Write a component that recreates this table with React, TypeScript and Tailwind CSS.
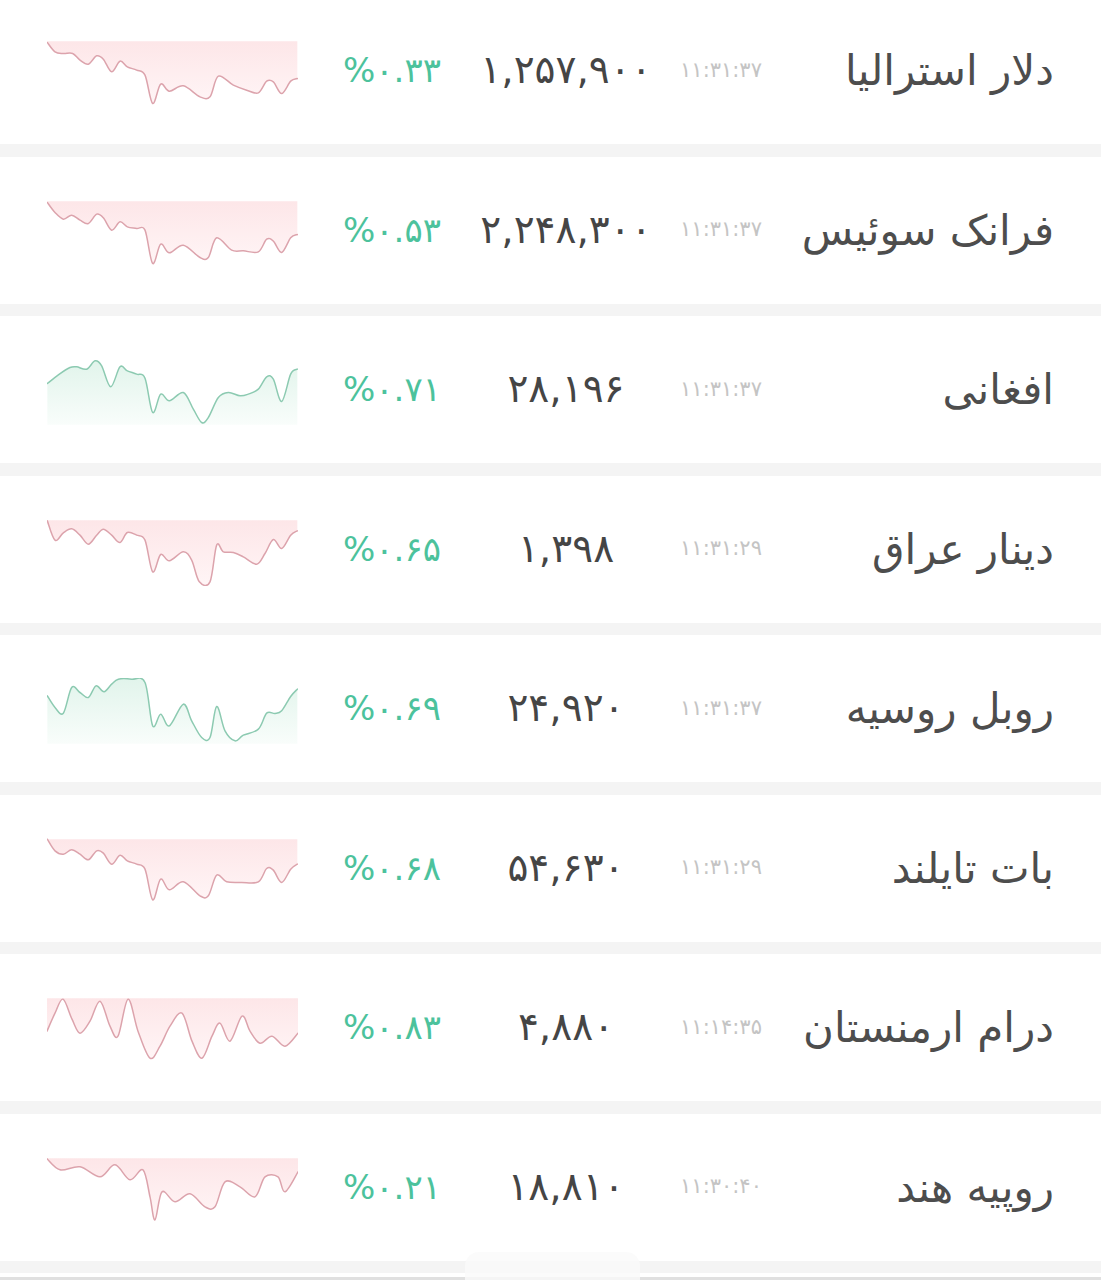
type Pt = [number, number];

type Rate = {
  name: string;
  price: string;
  change: string;
  time: string;
  up: boolean;
  points: Pt[];
  shift?: number;
};

const rates: Rate[] = [
  {
    name: "دلار استرالیا",
    price: "۱,۲۵۷,۹۰۰",
    change: "%۰.۳۳",
    time: "۱۱:۳۱:۳۷",
    up: false,
    points: [
      [22, 32], [45, 60], [70, 65], [98, 65], [120, 85], [145, 97], [170, 72], [190, 82],
      [215, 120], [240, 88], [262, 105], [290, 115], [315, 130], [338, 215], [362, 157],
      [388, 178], [430, 162], [480, 195], [510, 195], [535, 133], [580, 160], [620, 175],
      [655, 183], [680, 148], [700, 150], [725, 185], [752, 148], [772, 140],
    ],
  },
  {
    name: "فرانک سوئیس",
    price: "۲,۲۴۸,۳۰۰",
    change: "%۰.۵۳",
    time: "۱۱:۳۱:۳۷",
    up: false,
    points: [
      [22, 32], [45, 62], [70, 82], [95, 70], [120, 85], [145, 95], [170, 67], [190, 78],
      [215, 115], [240, 90], [262, 105], [290, 110], [315, 115], [338, 215], [362, 157],
      [388, 183], [430, 160], [480, 197], [505, 197], [530, 138], [575, 175], [610, 177],
      [655, 180], [680, 142], [700, 148], [725, 182], [752, 138], [772, 128],
    ],
  },
  {
    name: "افغانی",
    price: "۲۸,۱۹۶",
    change: "%۰.۷۱",
    time: "۱۱:۳۱:۳۷",
    up: true,
    points: [
      [22, 98], [55, 72], [90, 50], [110, 48], [140, 55], [165, 30], [185, 45], [212, 108],
      [240, 48], [262, 60], [290, 70], [315, 82], [338, 185], [362, 130], [388, 150],
      [430, 125], [460, 175], [485, 215], [505, 200], [535, 140], [565, 125], [600, 135],
      [625, 130], [655, 115], [680, 78], [700, 85], [725, 152], [752, 70], [772, 55],
    ],
  },
  {
    name: "دینار عراق",
    price: "۱,۳۹۸",
    change: "%۰.۶۵",
    time: "۱۱:۳۱:۲۹",
    up: false,
    shift: -12,
    points: [
      [22, 42], [45, 100], [70, 78], [95, 66], [120, 85], [145, 112], [170, 85], [190, 67],
      [215, 85], [240, 107], [262, 77], [290, 85], [315, 100], [338, 195], [362, 143],
      [388, 162], [430, 135], [455, 160], [478, 225], [510, 225], [530, 115], [550, 135],
      [580, 137], [610, 150], [650, 172], [675, 140], [700, 98], [725, 125], [752, 85],
      [772, 72],
    ],
  },
  {
    name: "روبل روسیه",
    price: "۲۴,۹۲۰",
    change: "%۰.۶۹",
    time: "۱۱:۳۱:۳۷",
    up: true,
    shift: -12,
    points: [
      [22, 90], [45, 125], [70, 142], [95, 65], [120, 80], [145, 95], [168, 60], [192, 78],
      [215, 55], [235, 40], [275, 40], [315, 50], [338, 180], [362, 145], [388, 180],
      [430, 115], [455, 165], [485, 215], [510, 215], [530, 122], [555, 195], [585, 225],
      [610, 208], [655, 190], [680, 142], [705, 143], [725, 135], [752, 92], [772, 70],
    ],
  },
  {
    name: "بات تایلند",
    price: "۵۴,۶۳۰",
    change: "%۰.۶۸",
    time: "۱۱:۳۱:۲۹",
    up: false,
    shift: -12,
    points: [
      [22, 40], [45, 75], [70, 85], [95, 72], [120, 85], [145, 102], [170, 75], [190, 82],
      [215, 115], [240, 88], [262, 105], [290, 115], [315, 130], [338, 222], [362, 160],
      [388, 192], [430, 168], [480, 210], [505, 210], [530, 148], [560, 168], [605, 170],
      [655, 168], [680, 128], [700, 133], [725, 170], [752, 130], [772, 115],
    ],
  },
  {
    name: "درام ارمنستان",
    price: "۴,۸۸۰",
    change: "%۰.۸۳",
    time: "۱۱:۱۴:۳۵",
    up: false,
    points: [
      [21, 127], [45, 73], [69, 31], [96, 91], [120, 133], [150, 97], [180, 37], [210, 112],
      [234, 142], [264, 31], [294, 127], [330, 208], [360, 172], [390, 112], [426, 73],
      [456, 157], [486, 208], [516, 142], [540, 103], [570, 157], [606, 82], [630, 127],
      [660, 163], [696, 142], [735, 172], [774, 133],
    ],
  },
  {
    name: "روپیه هند",
    price: "۱۸,۸۱۰",
    change: "%۰.۲۱",
    time: "۱۱:۳۰:۴۰",
    up: false,
    points: [
      [21, 30], [60, 63], [120, 54], [180, 84], [225, 48], [270, 93], [309, 63], [330, 144],
      [345, 213], [366, 129], [405, 159], [450, 135], [495, 174], [525, 174], [555, 99],
      [600, 114], [645, 144], [675, 84], [714, 84], [735, 129], [774, 69],
    ],
  },
];

function smooth(pts: Pt[]) {
  let d = `M${pts[0][0]} ${pts[0][1]}`;
  for (let i = 0; i < pts.length - 1; i++) {
    const p0 = pts[i - 1] || pts[i];
    const p1 = pts[i];
    const p2 = pts[i + 1];
    const p3 = pts[i + 2] || p2;
    const c1x = p1[0] + (p2[0] - p0[0]) / 6;
    const c1y = p1[1] + (p2[1] - p0[1]) / 6;
    const c2x = p2[0] - (p3[0] - p1[0]) / 6;
    const c2y = p2[1] - (p3[1] - p1[1]) / 6;
    d += ` C${c1x} ${c1y} ${c2x} ${c2y} ${p2[0]} ${p2[1]}`;
  }
  return d;
}

function Sparkline({ rate, id }: { rate: Rate; id: number }) {
  const s = rate.shift ?? 0;
  const pts = rate.points.map(([x, y]) => [x, y + s] as Pt);
  const line = smooth(pts);
  const first = pts[0];
  const last = pts[pts.length - 1];
  const edge = rate.up ? 222 : 28;
  const area = `${line} L${last[0]} ${edge} L${first[0]} ${edge} Z`;
  const gid = `g${id}`;
  return (
    <svg width={251} height={67} viewBox="21 25 753 200" className="block">
      <defs>
        <linearGradient id={gid} x1="0" y1="0" x2="0" y2="1">
          {rate.up ? (
            <>
              <stop offset="0%" stopColor="#e1f4eb" />
              <stop offset="100%" stopColor="#f9fdfb" />
            </>
          ) : (
            <>
              <stop offset="0%" stopColor="#fde6e8" />
              <stop offset="100%" stopColor="#fff5f6" />
            </>
          )}
        </linearGradient>
      </defs>
      <path d={area} fill={`url(#${gid})`} />
      <path
        d={line}
        fill="none"
        stroke={rate.up ? "#8ccab1" : "#dca3ac"}
        strokeWidth={4.5}
        strokeLinejoin="round"
        strokeLinecap="round"
      />
    </svg>
  );
}

function RateRow({ rate, id }: { rate: Rate; id: number }) {
  return (
    <div className="h-[147px] bg-white flex items-center">
      <div className="ml-[47px] w-[251px] mt-[6px]">
        <Sparkline rate={rate} id={id} />
      </div>
      <div dir="ltr" className="w-[188px] flex justify-center whitespace-nowrap text-[34px] text-[#4cc29c]">
        {rate.change}
      </div>
      <div dir="ltr" className="w-[160px] flex justify-center whitespace-nowrap text-[39px] text-[#454545]">
        {rate.price}
      </div>
      <div dir="ltr" className="w-[150px] flex justify-center whitespace-nowrap text-[21px] text-[#c4c4c4]">
        {rate.time}
      </div>
      <div dir="rtl" className="w-[258px] whitespace-nowrap text-[42px] text-[#4d4d4d]">
        {rate.name}
      </div>
    </div>
  );
}

export default function App() {
  return (
    <div className="relative w-full h-[1280px] overflow-hidden bg-white font-['DejaVu_Sans',sans-serif]">
      <div className="-mt-[3px]">
        {rates.map((r, i) => (
          <div key={i}>
            <RateRow rate={r} id={i} />
            <div className="h-[12.5px] bg-[#f4f4f4]" />
          </div>
        ))}
        <div className="h-[4px] bg-white" />
        <div className="h-[3px] bg-[#e0e0e0]" />
      </div>
      <div className="absolute left-[465px] bottom-0 w-[175px] h-[28px] rounded-t-[14px] bg-[#fafafa]/80" />
    </div>
  );
}
